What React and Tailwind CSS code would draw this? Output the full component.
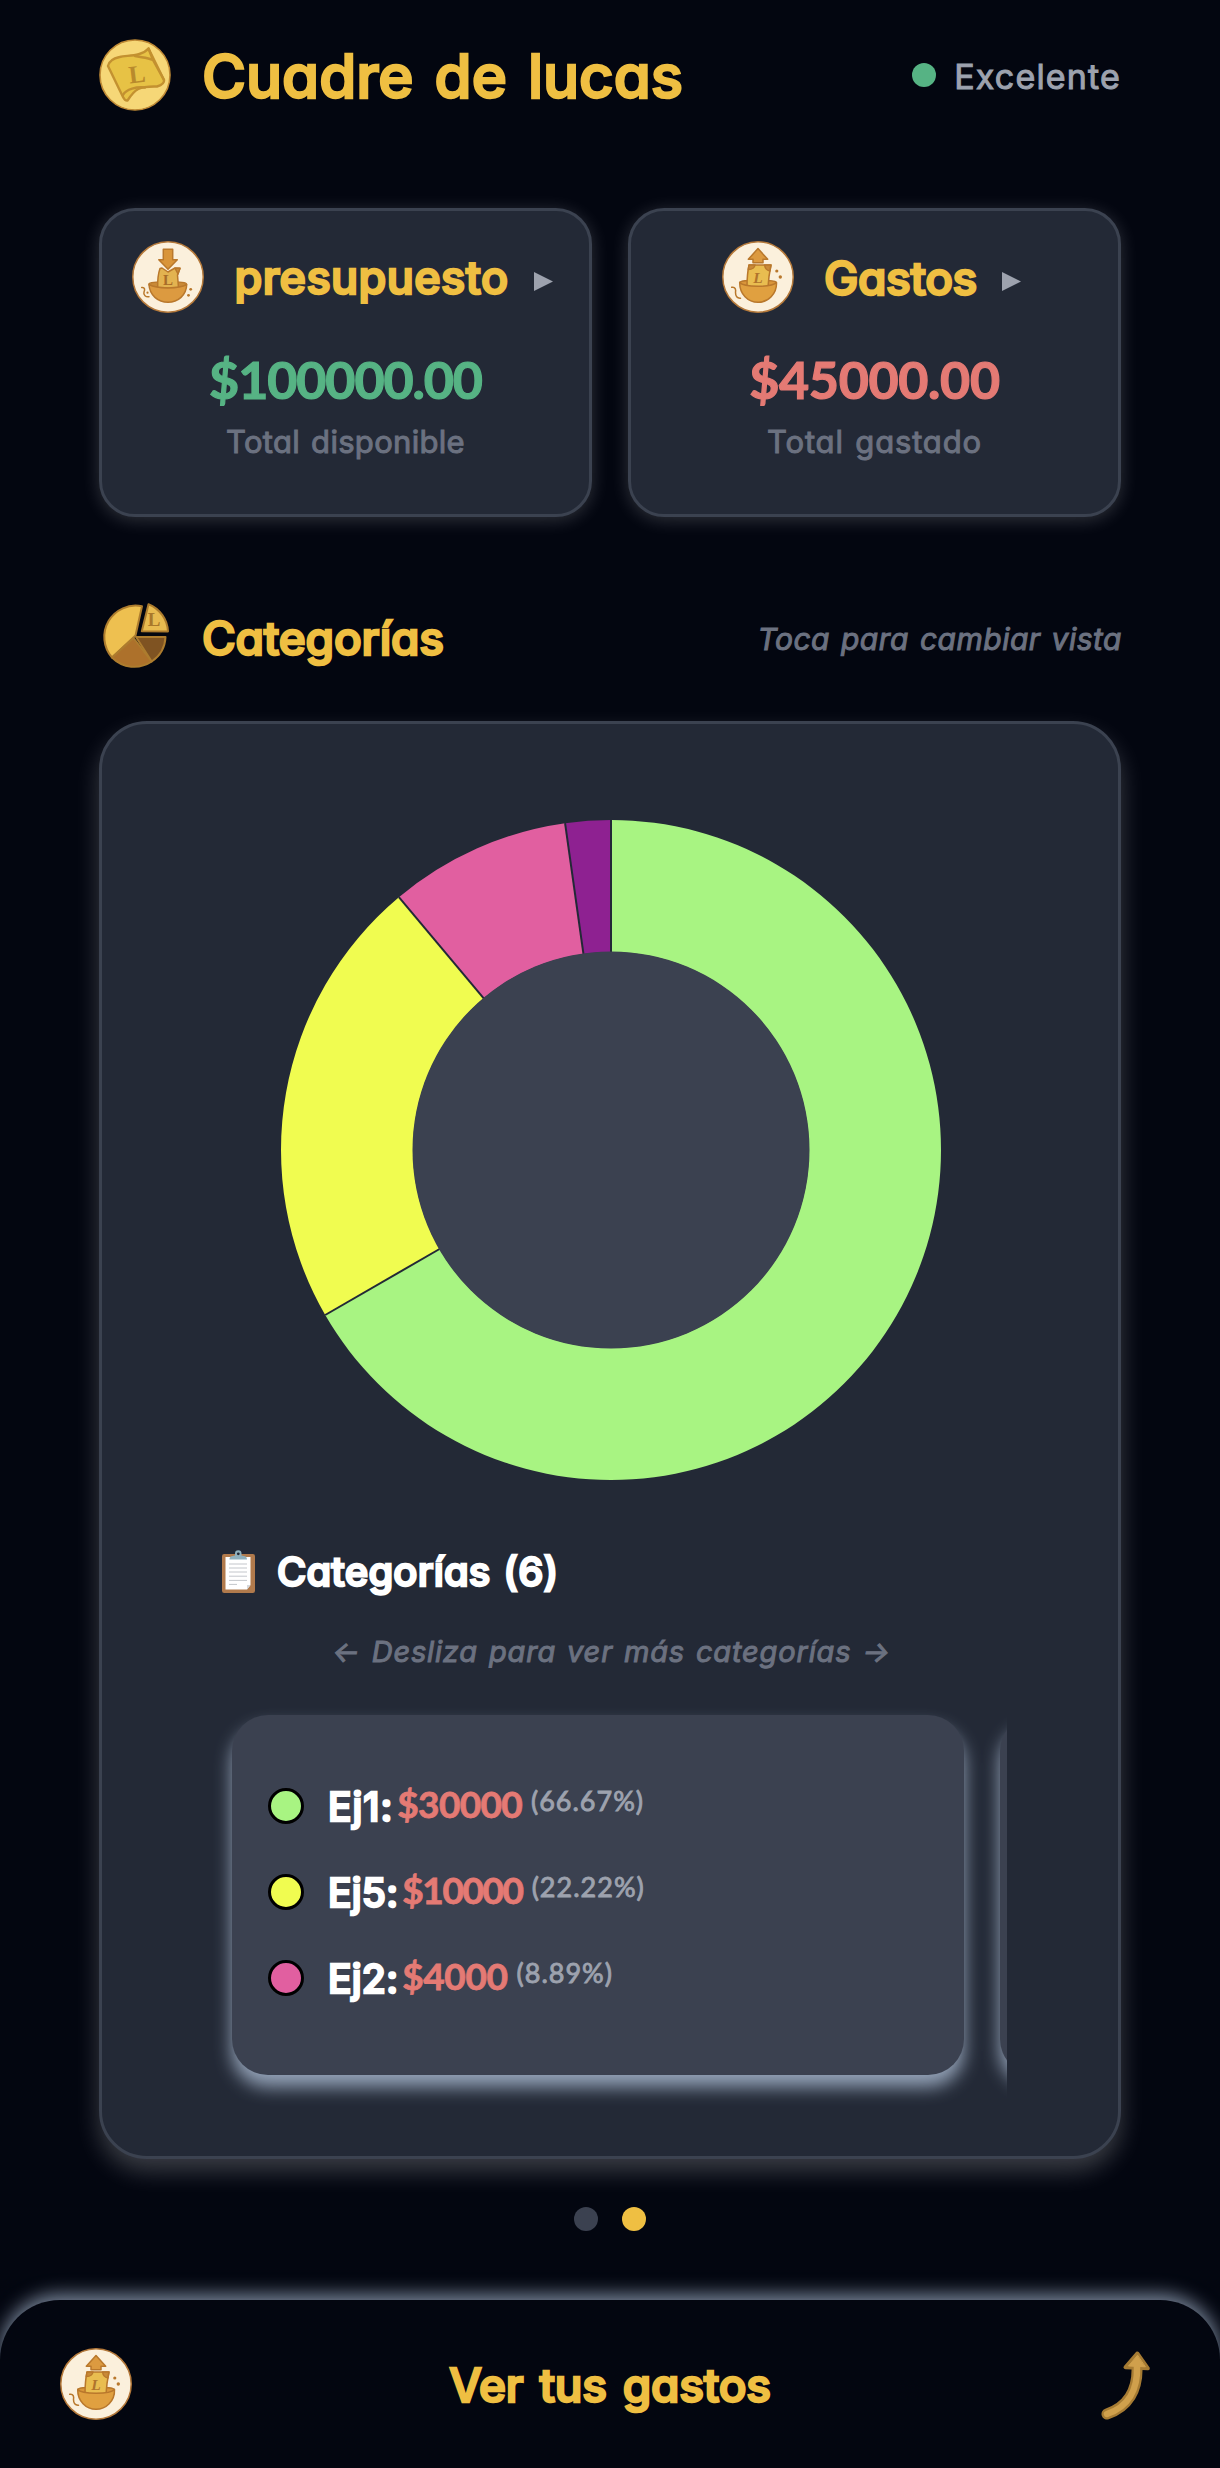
import React from "react";

const inter = "font-['Inter','Liberation_Sans',sans-serif] [font-feature-settings:'cv11'] whitespace-nowrap";
const lato = "font-['Lato','Liberation_Sans',sans-serif] whitespace-nowrap";
const bold = `${inter} font-medium [-webkit-text-stroke:2.4px_currentColor] [stroke-linejoin:round]`;
const regular = `${inter} font-normal [-webkit-text-stroke:1px_currentColor] [stroke-linejoin:round]`;

const GREEN = "#a8f482";
const YELLOW = "#f0fc50";
const PINK = "#e15fa0";
const PURPLE = "#8e2191";

function CoinIcon() {
  return (
    <svg viewBox="0 0 72 72" className="size-[72px] shrink-0">
      <circle cx="36" cy="36" r="35" fill="#f6d777" stroke="#c08a35" strokeWidth="1.6" />
      <g fill="#e7c245" stroke="#c39130" strokeWidth="2.4" strokeLinejoin="round" strokeLinecap="round">
        <path d="M9 27 C10 22 14 19.5 20.6 18 C28 16 42 18 49.5 9.5 L54 21 L65 41 C65.5 44 63 46 58 47.5 C40 47 36 50 28.5 61.5 C26 62 25 60 24 58Z" />
        <path d="M49.5 9.5 L65 41" />
        <path d="M36 17 C42 18.5 48 18.5 54 21" fill="none" />
        <path d="M24 56 C27 50 38 47.5 46 48.5" fill="none" />
      </g>
      <text x="38" y="43.5" textAnchor="middle" fontFamily="Liberation Serif, serif" fontWeight="700" fontSize="25" fill="#b98a2c" transform="rotate(-7 38 36)">L</text>
    </svg>
  );
}

function BowlBase() {
  return <circle cx="36" cy="36" r="35.2" fill="#fbf0dc" stroke="#b5793a" strokeWidth="1.5" />;
}

function BudgetIcon() {
  return (
    <svg viewBox="0 0 72 72" className="size-[72px] shrink-0">
      <BowlBase />
      <g stroke="#b9782c" strokeWidth="1.5" strokeLinejoin="round" strokeLinecap="round">
        <path d="M17 43 C18 40 54 40 54.5 43 L54 46 H18Z" fill="#c98a38" />
        <path d="M28 27.5 L30 27 L36 31 L43 27 L48 27.3 L45.5 34 L46.5 47 H25.7 C25.5 40 26 33 28 27.5Z" fill="#e3b350" />
        <path d="M43 27.2 L48 27.3 L46 33Z" fill="#c98a38" />
        <path d="M31.3 8.2 H40.7 V18.8 H45.3 L36 28.3 L26.8 18.8 H31.3Z" fill="#d9953a" />
        <path d="M17 43.5 C25 48 47 48 54.7 43.5 C54.5 54 46 61.3 36 61.3 C26 61.3 17.5 54 17 43.5Z" fill="#dc9a40" />
        <path d="M9.7 46.5 C13 46 13 49 12 51 C11 54 14 56.3 17 55.7" fill="none" />
      </g>
      <g fill="#b9782c">
        <circle cx="58.7" cy="48.3" r="1.4" />
        <circle cx="56.5" cy="54.3" r="1.4" />
        <circle cx="15.5" cy="51.7" r="1.1" />
      </g>
      <text x="36" y="44" textAnchor="middle" fontFamily="Liberation Serif, serif" fontWeight="700" fontSize="15" fill="#a86c28">L</text>
    </svg>
  );
}

function SpendIcon() {
  return (
    <svg viewBox="0 0 72 72" className="size-[72px] shrink-0">
      <BowlBase />
      <g stroke="#b9782c" strokeWidth="1.5" strokeLinejoin="round" strokeLinecap="round">
        <path d="M18 41 C20 38.5 52 38.5 54 41 L53 45 H19Z" fill="#d9953a" />
        <path d="M27 24 H49 C47.5 31 46.5 38 46 46 H25 C25 38 25.5 31 27 24Z" fill="#e9bd50" />
        <path d="M27 24 H33 C32.5 27 30 28.5 26.3 28.5Z M49 24 H42.5 C43 27 45 29.5 47.8 30Z" fill="#c98a38" />
        <path d="M36 7.6 L45.7 18.3 H41 V21.7 H31 V18.3 H26.3Z" fill="#dc9a40" />
        <path d="M17.7 41.5 C22 46.5 50 46.5 54.5 41.5 C55 53 46 61.3 36 61.3 C26 61.3 17.5 53 17.7 41.5Z" fill="#e0a040" />
        <path d="M9.7 46.3 C13.5 45.5 14 49 13.5 51.5 C13.5 55 15 57.5 18.5 57.2" fill="none" />
      </g>
      <g fill="#b9782c">
        <circle cx="54.8" cy="30" r="1.6" />
        <circle cx="58.3" cy="36" r="1.7" />
      </g>
      <text x="36" y="41.8" textAnchor="middle" fontFamily="Liberation Serif, serif" fontStyle="italic" fontWeight="700" fontSize="15.5" fill="#b0742c">L</text>
    </svg>
  );
}

function PieIcon() {
  return (
    <svg viewBox="0 0 72 72" className="size-[72px] shrink-0">
      <g stroke="#ad7c2e" strokeWidth="2" strokeLinejoin="round">
        <path d="M36.5 34.5 L43 5.3 A31.3 31.3 0 0 0 13 56.5Z" fill="#eec050" />
        <path d="M34.5 37 L13 56.5 A31.3 31.3 0 0 0 52.7 60.5Z" fill="#ad712b" />
        <path d="M37 36 H66.5 A31 31 0 0 1 52.7 60.5Z" fill="#7f5322" />
        <path d="M42.8 30.2 L49.5 3.2 A31 31 0 0 1 69 30.4Z" fill="#e8bb50" />
      </g>
      <text x="55" y="24.5" textAnchor="middle" fontFamily="Liberation Serif, serif" fontWeight="700" fontSize="19" fill="#a9782b">L</text>
    </svg>
  );
}

function ArrowIcon() {
  return (
    <svg viewBox="0 0 72 72" className="size-[72px] shrink-0">
      <g fill="none" strokeLinecap="round" strokeLinejoin="round">
        <path d="M49 18 C50 42 40 59 19 66" stroke="#a67b33" strokeWidth="11" />
        <path d="M49.3 5.5 L37.5 19.3 L59.8 20.3Z" fill="#a67b33" stroke="#a67b33" strokeWidth="4" />
        <path d="M49 18 C50 42 40 59 19 66" stroke="#d0a04c" strokeWidth="6.5" />
        <path d="M49.3 7.5 L40.5 18 L57 18.8Z" fill="#d0a04c" stroke="#d0a04c" strokeWidth="1" />
      </g>
    </svg>
  );
}

function ClipboardIcon() {
  return (
    <svg viewBox="0 0 33 43" className="-mt-[3px] h-[43px] w-[33px] shrink-0">
      <rect x="0" y="4" width="33" height="39" rx="2.2" fill="#b17a4c" />
      <path d="M3.5 7 H28.5 V35 L25 39.5 H3.5Z" fill="#ffffff" />
      <path d="M28.5 35 L25 39.5 V35Z" fill="#d5d8dc" />
      <path d="M7.5 9.5 C7.5 6.5 9.5 6 13 5.5 V3.5 A3.2 3.2 0 0 1 19.5 3.5 V5.5 C23 6 25 6.5 25 9.5Z" fill="#8fb0bd" />
      <circle cx="16.3" cy="3.8" r="1.4" fill="#232936" />
      <path d="M7 14 H25 M7 18 H25 M7 22 H25 M7 26.2 H25 M7 30.4 H25 M7 34.4 H15" stroke="#c3c6cb" strokeWidth="1" />
    </svg>
  );
}

function Donut() {
  const data = [
    { value: 30000, color: GREEN },
    { value: 10000, color: YELLOW },
    { value: 4000, color: PINK },
    { value: 1000, color: PURPLE },
  ];
  const total = data.reduce((sum, d) => sum + d.value, 0);
  const point = (r, t) => {
    const a = t * 2 * Math.PI - Math.PI / 2;
    return `${330 + r * Math.cos(a)} ${330 + r * Math.sin(a)}`;
  };
  let start = 0;
  const slices = data.map((d) => {
    const end = start + d.value / total;
    const large = end - start > 0.5 ? 1 : 0;
    const path = `M${point(330, start)} A330 330 0 ${large} 1 ${point(330, end)} L${point(198, end)} A198 198 0 ${large} 0 ${point(198, start)}Z`;
    const edge = `M${point(198, start)} L${point(330, start)}`;
    start = end;
    return { ...d, path, edge };
  });
  return (
    <svg viewBox="0 0 660 660" className="ml-px size-[660px]">
      {slices.map((s) => <path key={s.color} d={s.path} fill={s.color} />)}
      {slices.map((s) => <path key={s.color} d={s.edge} stroke="#222936" strokeWidth="2" />)}
      <circle cx="330" cy="330" r="198.5" fill="#3b4150" />
    </svg>
  );
}

function SummaryCard({ icon, title, titleClass, amount, amountClass, caption, captionClass }) {
  return (
    <section className="flex h-[309px] w-[493px] flex-col items-center rounded-[36px] border-[3px] border-[#3b4250] bg-[#232936] pt-[30px] shadow-[0_3px_18px_rgba(255,255,255,0.18)]">
      <div className="flex h-[72px] items-center pr-[6px]">
        {icon}
        <h2 className={`${bold} ml-[30px] pt-[2px] text-[#efbf42] ${titleClass}`}>{title}</h2>
        <svg viewBox="0 0 19 19" className="mt-[9px] ml-[25px] size-[19px]">
          <path d="M0 0 L19 9.5 L0 19Z" fill="#9da2ae" />
        </svg>
      </div>
      <p className={`${lato} mt-[36px] text-[52px] leading-[60px] font-bold [-webkit-text-stroke:1.2px_currentColor] [stroke-linejoin:round] ${amountClass}`}>{amount}</p>
      <p className={`${regular} mt-[13px] text-[31px] leading-[40px] text-[#6b7180] [word-spacing:2px] ${captionClass}`}>{caption}</p>
    </section>
  );
}

function CategoryRow({ color, name, nameClass, amount, amountClass, percent }) {
  return (
    <li className="flex h-[86px] items-center">
      <span className="size-[36px] shrink-0 rounded-full border-[3px] border-black" style={{ backgroundColor: color }} />
      <span className={`${bold} ml-[24px] pt-[2px] text-[39px] leading-[48px] text-white ${nameClass}`}>{name}</span>
      <span className={`${lato} ml-[4px] pb-[5px] text-[37px] leading-[48px] font-bold text-[#e47a74] [-webkit-text-stroke:0.8px_currentColor] ${amountClass}`}>{amount}</span>
      <span className={`${lato} ml-[9px] pb-[10px] text-[27px] leading-[40px] tracking-[1px] text-[#9da2ae] [-webkit-text-stroke:0.9px_currentColor]`}>{percent}</span>
    </li>
  );
}

const slide = "h-[360px] w-[732px] shrink-0 rounded-[36px] bg-[#3b4150] px-[36px] pt-[48px] shadow-[0_12px_18px_#94a3b8]";

export default function App() {
  return (
    <div className="flex h-[2468px] w-[1220px] flex-col overflow-hidden bg-[#030610]">
      <main className="px-[99px]">
        <header className="flex h-[150px] items-center">
          <CoinIcon />
          <h1 className={`${bold} ml-[31px] pt-[2px] text-[60px] leading-[72px] text-[#efbf42] [word-spacing:5px]`}>Cuadre de lucas</h1>
          <div className="ml-auto flex items-center">
            <span className="size-[24px] rounded-full bg-[#56b384]" />
            <span className={`${regular} ml-[18px] pt-[4px] text-[34px] leading-[40px] tracking-[1.17px] text-[#9da2ae]`}>Excelente</span>
          </div>
        </header>

        <div className="mt-[58px] flex justify-between">
          <SummaryCard
            icon={<BudgetIcon />}
            title="presupuesto"
            titleClass="text-[45px] tracking-[0.4px]"
            amount="$100000.00"
            amountClass="text-[#56b384] tracking-[-1.1px]"
            caption="Total disponible"
            captionClass="tracking-[0.3px]"
          />
          <SummaryCard
            icon={<SpendIcon />}
            title="Gastos"
            titleClass="text-[46px] tracking-[-0.4px]"
            amount="$45000.00"
            amountClass="text-[#e47a74] tracking-[-0.35px]"
            caption="Total gastado"
            captionClass="tracking-[0.84px]"
          />
        </div>

        <div className="mt-[84px] flex h-[72px] items-center">
          <PieIcon />
          <h2 className={`${bold} ml-[31px] pt-[2px] text-[46px] leading-[60px] tracking-[-0.2px] text-[#efbf42]`}>Categorías</h2>
          <p className={`${regular} -mr-px ml-auto pt-[3px] text-[30px] leading-[40px] tracking-[0.5px] text-[#6b7180] italic [word-spacing:2px]`}>Toca para cambiar vista</p>
        </div>

        <section className="mt-[48px] flex h-[1438px] flex-col items-center rounded-[48px] border-[3px] border-[#3b4250] bg-[#232936] pt-[96px] shadow-[0_12px_24px_rgba(255,255,255,0.22)]">
          <Donut />
          <div className="mt-[68px] flex h-[50px] w-full items-center pl-[120px]">
            <ClipboardIcon />
            <h3 className={`${bold} -mt-[2px] ml-[22px] text-[40px] leading-[50px] tracking-[0.15px] text-white [word-spacing:2px]`}>Categorías (6)</h3>
          </div>
          <p className={`${regular} mt-[34px] ml-[3px] text-[29px] leading-[40px] tracking-[0.84px] text-[#6b7180] italic [word-spacing:2px]`}>← Desliza para ver más categorías →</p>
          <div className="mt-[18px] flex h-[440px] w-[794px] gap-[36px] overflow-hidden pt-[25px] pl-[19px]">
            <ul className={slide}>
              <CategoryRow color={GREEN} name="Ej1:" nameClass="tracking-[1px]" amount="$30000" amountClass="tracking-[-0.7px]" percent="(66.67%)" />
              <CategoryRow color={YELLOW} name="Ej5:" nameClass="tracking-[0.25px]" amount="$10000" amountClass="tracking-[-1.4px]" percent="(22.22%)" />
              <CategoryRow color={PINK} name="Ej2:" nameClass="tracking-[0.25px]" amount="$4000" amountClass="tracking-[-0.4px]" percent="(8.89%)" />
            </ul>
            <div className={slide} />
          </div>
        </section>

        <div className="mt-[48px] flex justify-center gap-[24px]">
          <span className="size-[24px] rounded-full bg-[#3b4150]" />
          <span className="size-[24px] rounded-full bg-[#efbf42]" />
        </div>
      </main>

      <footer className="mt-[69px] flex h-[168px] shrink-0 items-center justify-between rounded-t-[60px] bg-[#030610] px-[60px] shadow-[0_-6px_18px_rgba(148,163,184,0.8)]">
        <SpendIcon />
        <span className={`${bold} pt-[2px] text-[46px] leading-[60px] tracking-[-0.24px] text-[#efbf42] [word-spacing:4px]`}>Ver tus gastos</span>
        <ArrowIcon />
      </footer>
    </div>
  );
}
